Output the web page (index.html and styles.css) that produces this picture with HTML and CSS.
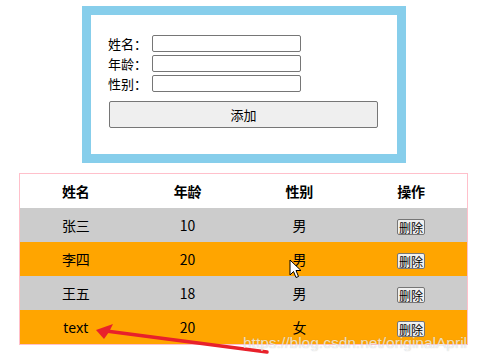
FILE: index.html
```html
<!DOCTYPE html>
<html lang="zh">
<head>
<meta charset="utf-8">
<link rel="stylesheet" href="styles.css">
</head>
<body>
<div class="page">
  <div class="form-box">
    <div class="fields">
      <div class="field"><label class="label">姓名：</label><input class="input" type="text"></div>
      <div class="field"><label class="label">年龄：</label><input class="input" type="text"></div>
      <div class="field"><label class="label">性别：</label><input class="input" type="text"></div>
    </div>
    <button class="add-btn">添加</button>
  </div>
  <table class="list">
    <thead>
      <tr><th>姓名</th><th>年龄</th><th>性别</th><th>操作</th></tr>
    </thead>
    <tbody>
      <tr class="odd"><td>张三</td><td>10</td><td>男</td><td><button class="del">删除</button></td></tr>
      <tr class="even"><td>李四</td><td>20</td><td>男</td><td><button class="del">删除</button></td></tr>
      <tr class="odd"><td>王五</td><td>18</td><td>男</td><td><button class="del">删除</button></td></tr>
      <tr class="even"><td class="latin">text</td><td>20</td><td>女</td><td><button class="del">删除</button></td></tr>
    </tbody>
  </table>
</div>
<svg class="cursor" width="13" height="20" viewBox="0 0 13 20">
  <path d="M1 1 L1 16 L4.5 12.5 L7 18.5 L9.5 17.5 L7 11.5 L12 11.5 Z" fill="#fff" stroke="#000" stroke-width="1" stroke-linejoin="round"/>
</svg>
<svg class="arrow" width="482" height="363" viewBox="0 0 482 363">
  <path d="M267 352 L106 331" stroke="#e8212b" stroke-width="3.5" stroke-linecap="round"/>
  <path d="M96 330 L113 324 L109 332 L104 339 Z" fill="#e8212b"/>
</svg>
<div class="watermark">https://blog.csdn.net/originalApril</div>
</body>
</html>
```
FILE: styles.css
```css
html, body {
  margin: 0;
  padding: 0;
  background: #fff;
}
body {
  font-family: "Microsoft YaHei", "Noto Sans CJK SC", sans-serif;
  color: #000;
  position: relative;
  width: 482px;
  height: 363px;
  overflow: hidden;
}
.page {
  display: flex;
  flex-direction: column;
  align-items: flex-start;
  padding-top: 6px;
}
.form-box {
  margin-left: 82px;
  width: 270px;
  border: 9px solid #87ceeb;
  padding: 20px 19px 26px 17px;
  display: flex;
  flex-direction: column;
}
.fields {
  display: flex;
  flex-direction: column;
  gap: 3px;
}
.field {
  display: flex;
  align-items: center;
  height: 17px;
}
.label {
  width: 44px;
  font-size: 13px;
  line-height: 17px;
  white-space: nowrap;
}
.input {
  box-sizing: border-box;
  width: 149px;
  height: 17px;
  margin: 0;
  padding: 0 2px;
  border: 1px solid #767676;
  border-radius: 2px;
  background: #fff;
}
.add-btn {
  box-sizing: border-box;
  margin: 9px 0 0 1px;
  width: 269px;
  height: 27px;
  border: 1px solid #767676;
  border-radius: 2px;
  background: #efefef;
  font-family: "Microsoft YaHei", "Noto Sans CJK SC", sans-serif;
  font-size: 13px;
  color: #000;
  padding: 0;
}
.list {
  margin: 10px 0 0 19px;
  width: 449px;
  border: 1px solid #ffc0cb;
  border-spacing: 0;
  table-layout: fixed;
  font-size: 14px;
}
.list th, .list td {
  height: 34px;
  padding: 0;
  text-align: center;
  vertical-align: middle;
}
.list th {
  font-weight: bold;
}
.odd {
  background: #cccccc;
}
.even {
  background: #ffa500;
}
.latin {
  font-family: "Microsoft YaHei", "Noto Sans", sans-serif;
}
.del {
  box-sizing: border-box;
  height: 16px;
  padding: 0 1px;
  margin: 0;
  border: 1px solid #767676;
  border-radius: 2px;
  background: #f0f0f0;
  font-family: "Microsoft YaHei", "Noto Sans CJK SC", sans-serif;
  font-size: 12px;
  line-height: 13px;
  color: #000;
  vertical-align: middle;
}
.cursor {
  position: absolute;
  left: 289px;
  top: 259px;
}
.arrow {
  position: absolute;
  left: 0;
  top: 0;
  pointer-events: none;
}
.watermark {
  position: absolute;
  left: 243px;
  top: 336px;
  font-family: "Liberation Sans", Arial, sans-serif;
  font-size: 15.5px;
  line-height: 14px;
  color: rgba(255, 255, 255, 0.72);
  text-shadow: 0 0 1px rgba(120, 120, 120, 0.45);
  white-space: nowrap;
}
```
